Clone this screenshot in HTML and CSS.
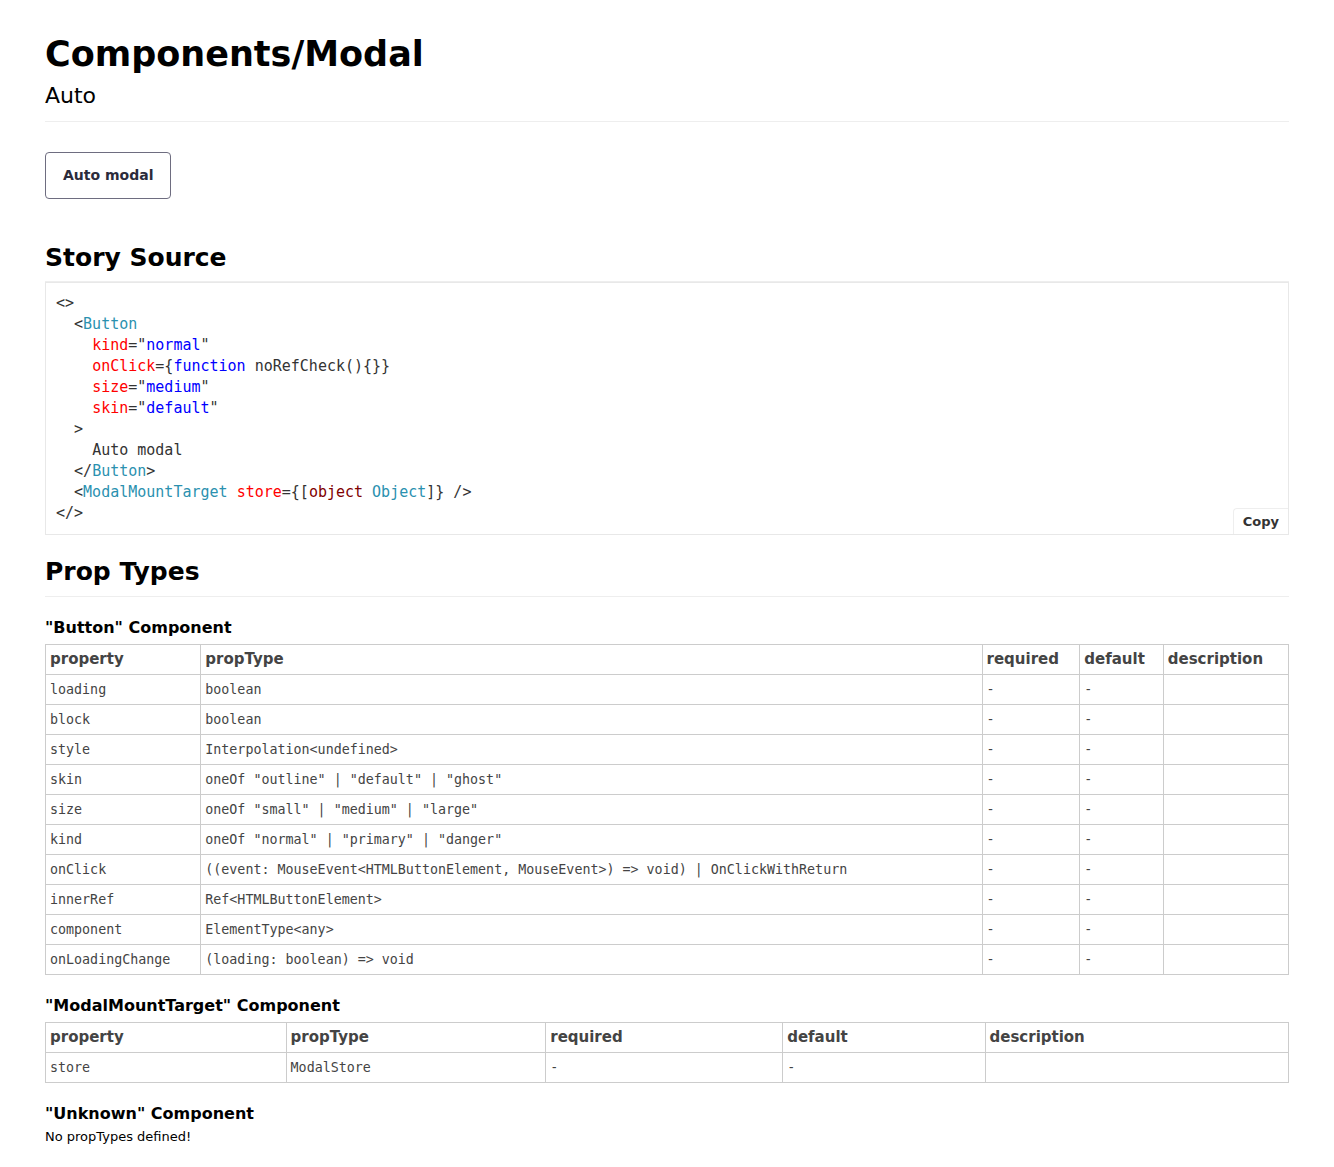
FILE: index.html
```
<!DOCTYPE html>
<html lang="en">
<head>
<meta charset="utf-8">
<title>Components/Modal</title>
<link rel="stylesheet" href="styles.css">
</head>
<body>
<div class="page">
  <header class="header">
    <h1 class="title">Components/Modal</h1>
    <h2 class="subtitle">Auto</h2>
  </header>

  <div class="story">
    <button class="auto-btn" type="button">Auto modal</button>
  </div>

  <h1 class="section-title">Story Source</h1>
  <div class="source">
<pre class="code"><span class="p">&lt;&gt;</span>
  <span class="p">&lt;</span><span class="tag">Button</span>
    <span class="attr">kind</span><span class="p">="</span><span class="str">normal</span><span class="p">"</span>
    <span class="attr">onClick</span><span class="p">={</span><span class="kw">function</span><span class="p"> noRefCheck(){}}</span>
    <span class="attr">size</span><span class="p">="</span><span class="str">medium</span><span class="p">"</span>
    <span class="attr">skin</span><span class="p">="</span><span class="str">default</span><span class="p">"</span>
  <span class="p">&gt;</span>
    <span class="p">Auto modal</span>
  <span class="p">&lt;/</span><span class="tag">Button</span><span class="p">&gt;</span>
  <span class="p">&lt;</span><span class="tag">ModalMountTarget</span> <span class="attr">store</span><span class="p">={[</span><span class="obj">object</span> <span class="tag">Object</span><span class="p">]} /&gt;</span>
<span class="p">&lt;/&gt;</span></pre>
    <button class="copy-btn" type="button">Copy</button>
  </div>

  <h1 class="section-title section-props">Prop Types</h1>

  <h2 class="comp-title">"Button" Component</h2>
  <table class="props">
    <thead>
      <tr><th>property</th><th>propType</th><th>required</th><th>default</th><th>description</th></tr>
    </thead>
    <tbody>
      <tr><td>loading</td><td>boolean</td><td>-</td><td>-</td><td></td></tr>
      <tr><td>block</td><td>boolean</td><td>-</td><td>-</td><td></td></tr>
      <tr><td>style</td><td>Interpolation&lt;undefined&gt;</td><td>-</td><td>-</td><td></td></tr>
      <tr><td>skin</td><td>oneOf "outline" | "default" | "ghost"</td><td>-</td><td>-</td><td></td></tr>
      <tr><td>size</td><td>oneOf "small" | "medium" | "large"</td><td>-</td><td>-</td><td></td></tr>
      <tr><td>kind</td><td>oneOf "normal" | "primary" | "danger"</td><td>-</td><td>-</td><td></td></tr>
      <tr><td>onClick</td><td>((event: MouseEvent&lt;HTMLButtonElement, MouseEvent&gt;) =&gt; void) | OnClickWithReturn</td><td>-</td><td>-</td><td></td></tr>
      <tr><td>innerRef</td><td>Ref&lt;HTMLButtonElement&gt;</td><td>-</td><td>-</td><td></td></tr>
      <tr><td>component</td><td>ElementType&lt;any&gt;</td><td>-</td><td>-</td><td></td></tr>
      <tr><td>onLoadingChange</td><td>(loading: boolean) =&gt; void</td><td>-</td><td>-</td><td></td></tr>
    </tbody>
  </table>

  <h2 class="comp-title">"ModalMountTarget" Component</h2>
  <table class="props">
    <thead>
      <tr><th>property</th><th>propType</th><th>required</th><th>default</th><th>description</th></tr>
    </thead>
    <tbody>
      <tr><td>store</td><td>ModalStore</td><td>-</td><td>-</td><td></td></tr>
    </tbody>
  </table>

  <h2 class="comp-title">"Unknown" Component</h2>
  <p class="no-props">No propTypes defined!</p>
</div>
</body>
</html>
```

FILE: styles.css
```
html, body {
  margin: 0;
  padding: 0;
  background: #fff;
}

body {
  font-family: "DejaVu Sans", "Noto Sans", sans-serif;
  color: #000;
}

.page {
  padding: 34px 45px 20px;
  font-size: 15px;
  line-height: 1.45;
}

.header {
  border-bottom: 1px solid #eee;
  padding-bottom: 13px;
}

.title {
  margin: 0;
  font-size: 35px;
  font-weight: bold;
  line-height: normal;
}

.subtitle {
  margin: 9px 0 0;
  font-size: 22px;
  font-weight: normal;
  line-height: normal;
}

.story {
  padding-top: 30px;
}

.auto-btn {
  display: inline-block;
  margin: 0;
  padding: 14px 17px;
  font-family: "DejaVu Sans", sans-serif;
  font-size: 14px;
  font-weight: bold;
  line-height: 17px;
  color: #2b2b3b;
  background: #fff;
  border: 1px solid #6e6d80;
  border-radius: 4px;
}

.section-title {
  margin: 41px 0 0;
  padding: 0 0 5px;
  font-size: 25px;
  font-weight: bold;
  line-height: 1.45;
  border-bottom: 1px solid #eee;
}

.section-props {
  margin-top: 19px;
}

.source {
  position: relative;
  border: 1px solid #e8e8e8;
}

.code {
  margin: 0;
  padding: 10px;
  font-family: "DejaVu Sans Mono", monospace;
  font-size: 15px;
  line-height: 21px;
  color: #333;
  white-space: pre;
}

.code .p { color: #333; }
.code .tag { color: #2b91af; }
.code .attr { color: #ff0000; }
.code .str { color: #0000ff; }
.code .kw { color: #0000ff; }
.code .obj { color: #800000; }

.copy-btn {
  position: absolute;
  right: 0;
  bottom: 0;
  margin: 0;
  padding: 4px 9px;
  font-family: "DejaVu Sans", sans-serif;
  font-size: 13px;
  font-weight: bold;
  line-height: 17px;
  color: #333;
  background: #fff;
  border: 0;
  border-top: 1px solid #eee;
  border-left: 1px solid #eee;
  border-radius: 4px 0 0 0;
}

.comp-title {
  margin: 19px 0 5px;
  font-size: 16px;
  font-weight: bold;
  line-height: 1.45;
}

.props {
  width: 100%;
  border-collapse: collapse;
}

.props th,
.props td {
  border: 1px solid #ccc;
  padding: 4px 4px;
  text-align: left;
  vertical-align: middle;
  line-height: 21px;
  color: #444;
}

.props th {
  font-family: "DejaVu Sans", sans-serif;
  font-size: 15px;
  font-weight: bold;
  line-height: 20px;
  padding-bottom: 5px;
}

.props td {
  font-family: "DejaVu Sans Mono", monospace;
  font-size: 13.33px;
}

.no-props {
  margin: 0;
  font-size: 13px;
  line-height: 13px;
}
```
